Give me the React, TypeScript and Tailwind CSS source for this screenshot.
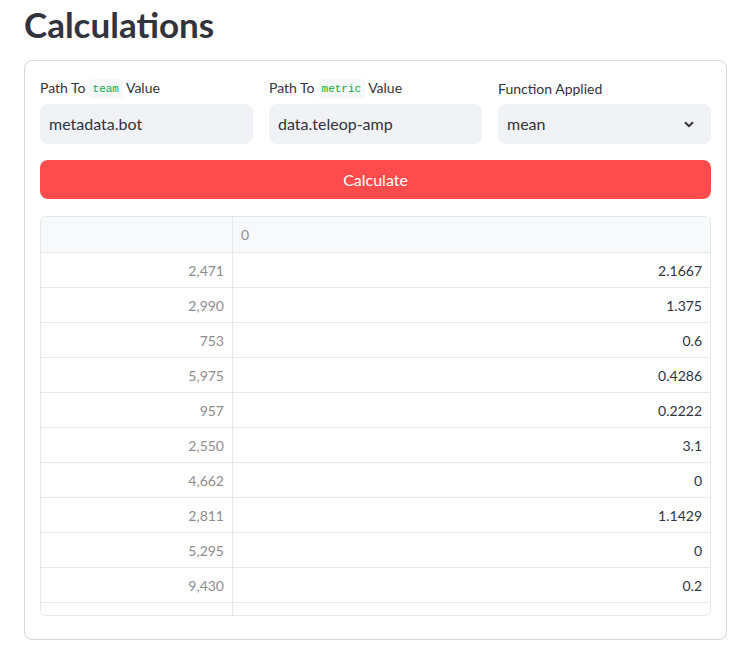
const rows: [string, string][] = [
  ["2,471", "2.1667"],
  ["2,990", "1.375"],
  ["753", "0.6"],
  ["5,975", "0.4286"],
  ["957", "0.2222"],
  ["2,550", "3.1"],
  ["4,662", "0"],
  ["2,811", "1.1429"],
  ["5,295", "0"],
  ["9,430", "0.2"],
  ["", ""],
];

const Code = ({ children }: { children: string }) => (
  <code className="mx-[3px] inline-block rounded bg-[#f7f8fa] px-[4px] py-[2px] align-middle font-['Liberation_Mono',monospace] text-[11px] leading-[16px] text-[#09ab3b]">
    {children}
  </code>
);

const Field = ({ label, value, select }: { label: React.ReactNode; value: string; select?: boolean }) => (
  <div className="flex flex-col">
    <div className="flex h-6 items-center text-[14px] text-[#31333f]">
      <span>{label}</span>
    </div>
    <div className="mt-1 flex h-10 items-center justify-between rounded-lg bg-[#f0f2f6] pl-[9px] pr-[17px] text-[16px] text-[#31333f]">
      <span>{value}</span>
      {select && (
        <svg width="10" height="7" viewBox="0 0 10 7" fill="none">
          <path d="M1 1.2 L5 5.2 L9 1.2" stroke="#31333f" strokeWidth="2" />
        </svg>
      )}
    </div>
  </div>
);

const App = () => {
  return (
    <div className="min-h-screen bg-white pl-6 pr-4 font-['Lato','Open_Sans',sans-serif] text-[#31333f]">
      <h1 className="flex h-[60px] items-start pt-[4px] text-[35px] font-bold leading-[40px]">
        Calculations
      </h1>
      <div className="rounded-lg border border-[#d6d6d9] px-[15px] pb-[23px] pt-[15px]">
        <div className="grid grid-cols-3 gap-4">
          <Field label={<>Path To<Code>team</Code>Value</>} value="metadata.bot" />
          <Field label={<>Path To<Code>metric</Code>Value</>} value="data.teleop-amp" />
          <Field label="Function Applied" value="mean" select />
        </div>
        <button className="mt-4 flex h-[39px] w-full items-center justify-center rounded-lg bg-[#ff4b4b] text-[16px] text-white">
          Calculate
        </button>
        <div className="mt-[17px] h-[400px] overflow-hidden rounded-md border border-[#e6e6eb] text-[14px]">
          <div className="flex h-[36px] border-b border-[#e6e6eb] bg-[#f8f9fb]">
            <div className="w-[192px] border-r border-[#e6e6eb]" />
            <div className="flex flex-1 items-center px-2 text-[#8b8d95]">0</div>
          </div>
          {rows.map(([idx, val], i) => (
            <div key={i} className="flex h-[35px] border-b border-[#e6e6eb]">
              <div className="flex w-[192px] items-center justify-end border-r border-[#e6e6eb] px-2 text-[#8b8d95]">
                {idx}
              </div>
              <div className="flex flex-1 items-center justify-end px-2 text-[#31333f]">{val}</div>
            </div>
          ))}
        </div>
      </div>
    </div>
  );
};

export default App;
